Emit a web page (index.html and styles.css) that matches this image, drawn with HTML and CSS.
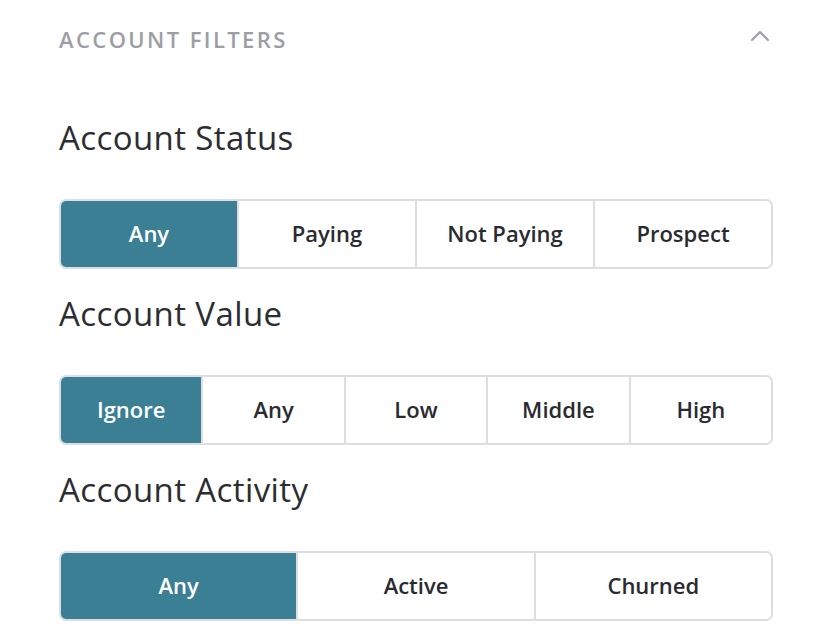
FILE: index.html
```html
<!DOCTYPE html>
<html>
<head>
<meta charset="utf-8">
<link rel="stylesheet" href="styles.css">
</head>
<body>
<div class="panel">
  <div class="panel-header">
    <span class="panel-title">ACCOUNT FILTERS</span>
    <svg class="chevron" width="20" height="12" viewBox="0 0 20 12"><path d="M2 10 L10 2 L18 10" fill="none" stroke="#9c9ea5" stroke-width="2.2" stroke-linecap="round" stroke-linejoin="round"/></svg>
  </div>
  <section class="filter">
    <h2 class="filter-title">Account Status</h2>
    <div class="segmented">
      <button class="seg active">Any</button>
      <button class="seg">Paying</button>
      <button class="seg">Not Paying</button>
      <button class="seg">Prospect</button>
    </div>
  </section>
  <section class="filter">
    <h2 class="filter-title">Account Value</h2>
    <div class="segmented">
      <button class="seg active">Ignore</button>
      <button class="seg">Any</button>
      <button class="seg">Low</button>
      <button class="seg">Middle</button>
      <button class="seg">High</button>
    </div>
  </section>
  <section class="filter">
    <h2 class="filter-title">Account Activity</h2>
    <div class="segmented">
      <button class="seg active">Any</button>
      <button class="seg">Active</button>
      <button class="seg">Churned</button>
    </div>
  </section>
</div>
</body>
</html>
```
FILE: styles.css
```css
html, body { margin: 0; padding: 0; background: #fff; }
body { font-family: "Open Sans", Lato, sans-serif; }
.panel { padding: 19px 43px 0 59px; }
.panel-header { display: flex; align-items: center; justify-content: space-between; height: 40px; }
.panel-title { font-size: 22px; letter-spacing: 2.4px; color: #9c9ea5; font-weight: 600; }
.chevron { margin-right: 3px; margin-top: -6px; }
.filter { display: flex; flex-direction: column; }
.filter:first-of-type { margin-top: 59px; }
.filter-title { margin: 0; font-size: 33px; line-height: 40px; font-weight: 400; color: #2c2d32; letter-spacing: 0.4px; }
.segmented { display: flex; margin: 41px 0 25px; border: 2px solid #dcdee3; border-radius: 7px; overflow: hidden; height: 66px; }
.seg { flex: 1; border: 0; background: #fff; font-family: inherit; font-size: 22px; font-weight: 600; color: #2a2b30; padding: 0 0 3px; margin: 0; }
.seg + .seg { border-left: 2px solid #dcdee3; }
.seg.active { background: #3a7f93; color: #fff; }
```
